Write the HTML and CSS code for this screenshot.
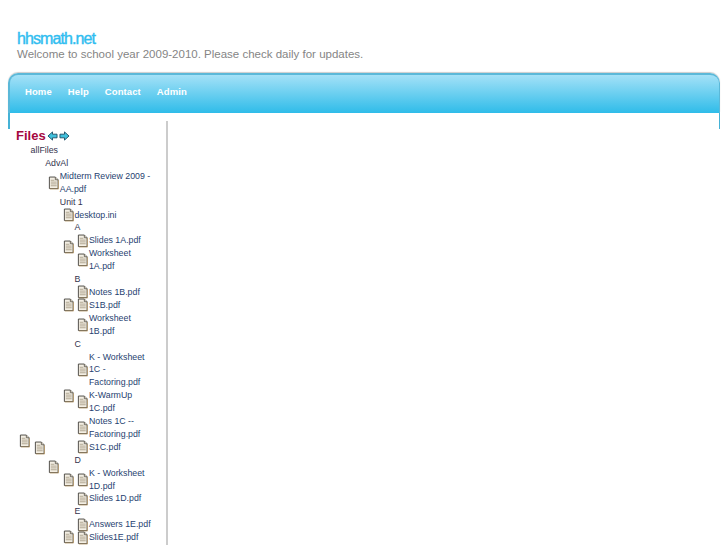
FILE: index.html
```html
<!DOCTYPE html>
<html>
<head>
<meta charset="utf-8">
<title>hhsmath.net</title>
<link rel="stylesheet" href="styles.css">
</head>
<body>
<svg class="defs" width="0" height="0"><defs>
<symbol id="doc" viewBox="0 0 12 14">
<path d="M1.5 .5H8L11 3.5V13H1.5Z" fill="#f4efe4" stroke="#45433d"/>
<path d="M8 .5V3.5H11" fill="#d8d0c0" stroke="#66635a"/>
<path d="M3 4H7M3 6H9.5M3 8H9.5M3 10H9.5" stroke="#aaa08a"/>
<path d="M2 13.5H11.5V4" fill="none" stroke="#b59a70"/>
</symbol>
<symbol id="left" viewBox="0 0 12 11"><path d="M1 5.5L6 1V3.5H11V7.5H6V10Z" fill="#3fc0dc" stroke="#1d4e66"/></symbol>
<symbol id="right" viewBox="0 0 12 11"><path d="M11 5.5L6 1V3.5H1V7.5H6V10Z" fill="#3fc0dc" stroke="#1d4e66"/></symbol>
</defs></svg>
<header class="site-head">
<h1 class="site-name">hhsmath.net</h1>
<p class="tagline">Welcome to school year 2009-2010. Please check daily for updates.</p>
</header>
<nav class="menu">
<a href="#">Home</a><a href="#">Help</a><a href="#">Contact</a><a href="#">Admin</a>
</nav>
<div class="frame-edges"></div>
<main class="content">
<aside class="sidebar">
<h2 class="files-title">Files <svg class="arrow"><use href="#left"/></svg><svg class="arrow"><use href="#right"/></svg></h2>
<div class="node">
<svg class="doc"><use href="#doc"/></svg>
<div class="kids">
<div class="label">allFiles</div>
<div class="node">
<svg class="doc"><use href="#doc"/></svg>
<div class="kids">
<div class="label">AdvAl</div>
<div class="node"><svg class="doc"><use href="#doc"/></svg><a class="kids file" href="#">Midterm Review 2009 - AA.pdf</a></div>
<div class="node">
<svg class="doc"><use href="#doc"/></svg>
<div class="kids">
<div class="label">Unit 1</div>
<div class="node"><svg class="doc"><use href="#doc"/></svg><a class="kids file" href="#">desktop.ini</a></div>
<div class="node">
<svg class="doc"><use href="#doc"/></svg>
<div class="kids">
<div class="label">A</div>
<div class="node"><svg class="doc"><use href="#doc"/></svg><a class="kids file" href="#">Slides 1A.pdf</a></div>
<div class="node"><svg class="doc"><use href="#doc"/></svg><a class="kids file" href="#">Worksheet 1A.pdf</a></div>
</div>
</div>
<div class="node">
<svg class="doc"><use href="#doc"/></svg>
<div class="kids">
<div class="label">B</div>
<div class="node"><svg class="doc"><use href="#doc"/></svg><a class="kids file" href="#">Notes 1B.pdf</a></div>
<div class="node"><svg class="doc"><use href="#doc"/></svg><a class="kids file" href="#">S1B.pdf</a></div>
<div class="node"><svg class="doc"><use href="#doc"/></svg><a class="kids file" href="#">Worksheet 1B.pdf</a></div>
</div>
</div>
<div class="node">
<svg class="doc"><use href="#doc"/></svg>
<div class="kids">
<div class="label">C</div>
<div class="node"><svg class="doc"><use href="#doc"/></svg><a class="kids file" href="#">K - Worksheet 1C - Factoring.pdf</a></div>
<div class="node"><svg class="doc"><use href="#doc"/></svg><a class="kids file" href="#">K-WarmUp 1C.pdf</a></div>
<div class="node"><svg class="doc"><use href="#doc"/></svg><a class="kids file" href="#">Notes 1C -- Factoring.pdf</a></div>
<div class="node"><svg class="doc"><use href="#doc"/></svg><a class="kids file" href="#">S1C.pdf</a></div>
</div>
</div>
<div class="node">
<svg class="doc"><use href="#doc"/></svg>
<div class="kids">
<div class="label">D</div>
<div class="node"><svg class="doc"><use href="#doc"/></svg><a class="kids file" href="#">K - Worksheet 1D.pdf</a></div>
<div class="node"><svg class="doc"><use href="#doc"/></svg><a class="kids file" href="#">Slides 1D.pdf</a></div>
</div>
</div>
<div class="node">
<svg class="doc"><use href="#doc"/></svg>
<div class="kids tail">
<div class="label">E</div>
<div class="node"><svg class="doc"><use href="#doc"/></svg><a class="kids file" href="#">Answers 1E.pdf</a></div>
<div class="node"><svg class="doc"><use href="#doc"/></svg><a class="kids file" href="#">Slides1E.pdf</a></div>
</div>
</div>
<div class="more-rows"></div>
</div>
</div>
</div>
</div>
</div>
</div>
</aside>
</main>
</body>
</html>
```
FILE: styles.css
```css
html, body { margin: 0; padding: 0; height: 545px; overflow: hidden; background: #fff; }
body { font-family: "Liberation Sans", Arial, sans-serif; color: #333; position: relative; }
.defs { position: absolute; }
.site-head { padding: 30px 0 0 17px; height: 43px; }
.site-name { margin: 0; font-size: 16px; line-height: 18px; font-weight: normal; color: #2fbdf0; letter-spacing: -0.9px; -webkit-text-stroke: 0.4px #2fbdf0; }
.tagline { margin: 0; font-size: 11.5px; line-height: 13px; color: #858585; }
.menu { margin: 0 7px 0 8px; display: flex; align-items: center; gap: 16px; padding: 0 0 6px 15px; height: 32px; border: 1px solid #5bb8d8; border-width: 2px 1px 0 2px; border-radius: 10px 10px 0 0; background: linear-gradient(#a4e1f7, #2fbce9); box-shadow: 0 -1px 1px #ccc; }
.menu a { color: #fff; font-size: 9.5px; font-weight: bold; letter-spacing: 0.1px; text-decoration: none; }
.frame-edges { margin: 0 7px 0 8px; height: 16px; border: solid #45b2d6; border-width: 0 1px 0 2px; }
.content { position: absolute; top: 121px; left: 0; width: 166px; height: 424px; border-right: 2px solid #ccc; }
.sidebar { width: 136px; padding: 7px 0 0 19px; font-size: 8.8px; line-height: 12.9px; }
.files-title { margin: 0 0 1px -3px; font-size: 13px; line-height: 15px; color: #a5073f; display: flex; align-items: center; gap: 1px; }
.arrow { width: 11px; height: 10px; }
.node { display: flex; align-items: center; }
.doc { width: 11px; height: 14px; flex: none; margin: -1px 0.6px -1px 0; }
.kids { flex: 1; min-width: 0; }
.label { color: #33334d; }
.file { color: #1f3f70; text-decoration: none; display: block; }
.kids > .node { margin-left: 3px; }
.tail { min-height: 64px; }
.more-rows { height: 169px; }
```
